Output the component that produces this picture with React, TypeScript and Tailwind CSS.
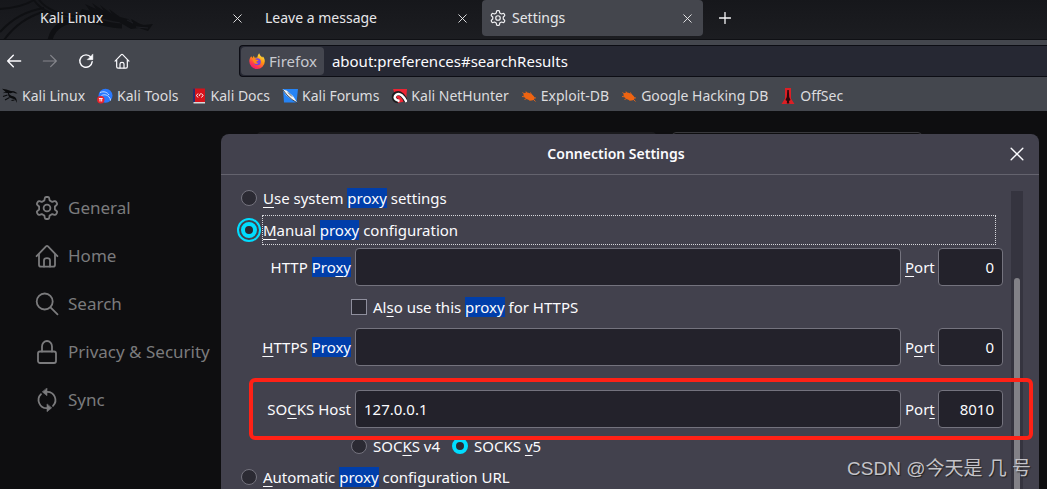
import React from 'react';

// One tooth of the settings gear, repeated every 60 degrees around the centre.
const TOOTH: [string, number[]][] = [
  ['L', [-2.6, -7.6]],
  ['L', [-2.2, -9.8]],
  ['Q', [-2, -11, -0.9, -11]],
  ['L', [0.9, -11]],
  ['Q', [2, -11, 2.2, -9.8]],
  ['L', [2.6, -7.6]],
];

const gearPath = () => {
  let d = '';
  for (let i = 0; i < 6; i++) {
    const a = (i * Math.PI) / 3;
    TOOTH.forEach(([cmd, pts], j) => {
      const out: string[] = [];
      for (let k = 0; k < pts.length; k += 2) {
        const x = pts[k] * Math.cos(a) - pts[k + 1] * Math.sin(a);
        const y = pts[k] * Math.sin(a) + pts[k + 1] * Math.cos(a);
        out.push(`${(x + 12).toFixed(2)} ${(y + 12).toFixed(2)}`);
      }
      d += (i === 0 && j === 0 ? 'M' : cmd) + out.join(' ');
    });
  }
  return d + 'Z';
};

const GEAR = gearPath();

type IconProps = { className?: string };

const Stroke = ({ className, width = 2, children }: { className?: string; width?: number; children: React.ReactNode }) => (
  <svg
    viewBox="0 0 24 24"
    className={className}
    fill="none"
    stroke="currentColor"
    strokeWidth={width}
    strokeLinecap="round"
    strokeLinejoin="round"
    aria-hidden="true"
  >
    {children}
  </svg>
);

const GearIcon = ({ className }: IconProps) => (
  <Stroke className={className} width={1.8}>
    <path d={GEAR} />
    <circle cx="12" cy="12" r="3.4" />
  </Stroke>
);

const HomeIcon = ({ className }: IconProps) => (
  <Stroke className={className} width={1.8}>
    <path d="M1.6 12.2 11 2.4q1-1 2 0l9.4 9.8" />
    <path d="M4 10.5v10.2q0 2 2 2h12q2 0 2-2V10.5" />
    <path d="M9 22.5V16.5q0-2.3 3-2.3t3 2.3v6" />
  </Stroke>
);

const SearchIcon = ({ className }: IconProps) => (
  <Stroke className={className} width={1.8}>
    <circle cx="9.7" cy="9.5" r="8" />
    <path d="m15.5 15.3 7 7" />
  </Stroke>
);

const LockIcon = ({ className }: IconProps) => (
  <Stroke className={className} width={1.8}>
    <rect x="3" y="11.5" width="18" height="11.5" rx="2" />
    <path d="M7 11.5V6.5a5 5.5 0 0 1 10 0v5" />
  </Stroke>
);

const SyncIcon = ({ className }: IconProps) => (
  <Stroke className={className} width={1.8}>
    <path d="M6 6.2A8.2 8.2 0 0 0 12 20.2M12 3.8A8.2 8.2 0 0 1 18 17.8" />
    <path d="M12 .3v7.4L7.5 4zM12 16.3v7.4l4.5-3.7z" fill="currentColor" strokeWidth={0.6} />
  </Stroke>
);

const BackIcon = ({ className }: IconProps) => (
  <Stroke className={className} width={2.1}>
    <path d="M22 12H2.5M11 3.5 2.5 12l8.5 8.5" />
  </Stroke>
);

const ForwardIcon = ({ className }: IconProps) => (
  <Stroke className={className} width={1.8}>
    <path d="M2 12h19.500M13 3.500l8.500 8.500-8.500 8.500" />
  </Stroke>
);

const ReloadIcon = ({ className }: IconProps) => (
  <Stroke className={className} width={2.1}>
    <path d="M19.500 6.500A9.300 9.300 0 1 0 21.300 13" />
    <path d="M22.300 2v8h-8z" fill="currentColor" strokeWidth={0.8} />
  </Stroke>
);

const CloseIcon = ({ className }: IconProps) => (
  <Stroke className={className} width={2.4}>
    <path d="m2 2 20 20M22 2 2 22" />
  </Stroke>
);

const PlusIcon = ({ className }: IconProps) => (
  <Stroke className={className} width={2.6}>
    <path d="M12 1v22M1 12h22" />
  </Stroke>
);

const FirefoxIcon = () => (
  <svg viewBox="0 0 16 16" className="size-4 shrink-0" aria-hidden="true">
    <defs>
      <linearGradient id="fx" x1="0.8" y1="0" x2="0.2" y2="1">
        <stop offset="0" stopColor="#fff14f" />
        <stop offset="0.4" stopColor="#ff980e" />
        <stop offset="0.75" stopColor="#ff3750" />
        <stop offset="1" stopColor="#e6157a" />
      </linearGradient>
    </defs>
    <path fill="url(#fx)" d="M2.300 3.300 3.500 5l1.300-2.200.8 2 2.800-.4c.2-1.500.6-3 1.800-4.200.4 2 2 3 3 4.300.5-.2.600-.9.500-1.200 1.300 1.400 2.100 3 2.100 5A7.700 7.700 0 0 1 8 16 7.700 7.700 0 0 1 .300 8.300C.3 6.500 1 4.500 2.300 3.300z" />
    <circle cx="8.300" cy="8.800" r="3.500" fill="#7543e3" />
    <path fill="#ff8a16" d="M3.300 6.400c1.700-.8 3-.4 4.200.4l2 .2c-.2 1.100-1.600 1-2 1.500-.2 1.200.7 1.500 2 1.200-1 1.500-3.300 1.600-4.400.2z" />
  </svg>
);

const icons = {
  kali: (
    <>
      <path
        d="M0 .8 4.500 1.500 9 3l3 .3 3.500 2-1.500.2-3-1-2.500.8-1.500-.2c0 2 1.800 2.500 4 3.200 2.500.9 4.200 2.200 3.800 6.700-.6-2.300-1.600-3.800-3.800-4.300C7.500 10 5.800 8.500 6 5.300L3.500 4.800.5 5.300 3.500 3.700z"
        fill="#0b0c0e"
      />
      <path d="M1 8.500 5.500 7M3 12l4.500-2.500M9.500 12.500l3-.5" stroke="#0b0c0e" strokeWidth="1.100" />
    </>
  ),
  tools: (
    <>
      <circle cx="8.500" cy="7.800" r="7" fill="#2979ff" />
      <path d="M3 4.500c4-1.500 7-.5 9 2.500M4.500 7.500c3-1.500 6-.5 7.500 1.500 1 1 1.500 2 1.500 3.500" fill="none" stroke="#c7dcff" strokeWidth="1" />
      <circle cx="3.800" cy="11.700" r="3.700" fill="#e8232b" />
      <path d="M1.900 10.500h3.800M3 10.500v3M4.700 10.500v3" stroke="#fff" strokeWidth=".9" />
    </>
  ),
  docs: (
    <>
      <path d="M2 .5h12v13.500H2z" fill="#d5131b" />
      <path d="M2 .5h2v13.500H2z" fill="#27306d" />
      <path d="M2.500 14H14v1.500H2.500z" fill="#d9d9d9" />
      <path d="m7 5.500-1.500 2L7 9.500M10.500 5.500l1.500 2-1.500 2M8 8l1.500-2.500" fill="none" stroke="#fff" strokeWidth="1" />
    </>
  ),
  forums: (
    <>
      <path d="M1 1h15l-1.500 13.500H2z" fill="#2684f5" />
      <path d="m.5 1.500 4 1 6.500 5.500 4.500 7-6-3.500L4 7z" fill="#f4f6f8" />
      <path d="m1 2 4 5 5 4.500 5.500 3.500M6 4.500l4 4" fill="none" stroke="#20242c" strokeWidth=".8" />
    </>
  ),
  nethunter: (
    <>
      <path d="M2 1h14l-1 12-8 2z" fill="#ed2433" />
      <path d="M15 13.500C13 8 9 4 5.500 5.500 1.500 7.500 2.500 12.500 7 13" fill="none" stroke="#1c1c1e" strokeWidth="4.500" />
      <path d="M15.500 14C12.500 8 9 4.500 5.500 6.500 2.500 8.500 3 12 8.500 13" fill="none" stroke="#fff" strokeWidth="2.400" />
    </>
  ),
  exploit: (
    <>
      <ellipse cx="8" cy="8.500" rx="6" ry="3.300" transform="rotate(25 8 8.500)" fill="#ef6412" />
      <path d="m1.500 4.500 4 3M5 3.500l2 3.500M9.500 4.500l1 2.500M1 8.500l4 .5M3.500 11.500 7 10M9 13v-3M14.500 13.500 11 10M15 10l-4-.500" stroke="#ef6412" strokeWidth=".9" />
    </>
  ),
  offsec: (
    <>
      <path d="M5 0h6v10.500L14.500 16h-13L5 10.500z" fill="#dc1f25" />
      <path d="M7.300 2h1.500l.4 7 1.300 3-1.500 1 .3 2.500H6.800L7 13l-1.500-1 1.300-3z" fill="#2c080b" />
    </>
  ),
};

const bookmarks: { name: string; icon: keyof typeof icons }[] = [
  { name: 'Kali Linux', icon: 'kali' },
  { name: 'Kali Tools', icon: 'tools' },
  { name: 'Kali Docs', icon: 'docs' },
  { name: 'Kali Forums', icon: 'forums' },
  { name: 'Kali NetHunter', icon: 'nethunter' },
  { name: 'Exploit-DB', icon: 'exploit' },
  { name: 'Google Hacking DB', icon: 'exploit' },
  { name: 'OffSec', icon: 'offsec' },
];

const tabs = [
  { name: 'Kali Linux', active: false },
  { name: 'Leave a message', active: false },
  { name: 'Settings', active: true },
];

const categories = [
  { name: 'General', Icon: GearIcon },
  { name: 'Home', Icon: HomeIcon },
  { name: 'Search', Icon: SearchIcon },
  { name: 'Privacy & Security', Icon: LockIcon },
  { name: 'Sync', Icon: SyncIcon },
];

const Hit = ({ children }: { children: React.ReactNode }) => (
  <mark className="bg-[#003eaa] text-inherit">{children}</mark>
);

// Access key letter
const Key = ({ children }: { children: React.ReactNode }) => (
  <span className="underline decoration-1 underline-offset-3">{children}</span>
);

const radioClass =
  'size-4 shrink-0 appearance-none rounded-full border border-[#74737e] bg-[#2b2a33] checked:border-4 checked:border-[#00ddff]';
const fieldClass = 'h-[38px] rounded border border-[#74737e] bg-[#23222b] px-2 text-[#fbfbfe] outline-none';

type ProxyRowProps = {
  id: string;
  label: React.ReactNode;
  portLabel: React.ReactNode;
  host: string;
  port: string;
};

function ProxyRow({ id, label, portLabel, host, port }: ProxyRowProps) {
  return (
    <div className="flex items-center gap-1">
      <label htmlFor={id} className="w-[110px] shrink-0 text-right whitespace-nowrap">{label}</label>
      <input id={id} type="text" defaultValue={host} className={`${fieldClass} min-w-0 flex-1`} />
      <label htmlFor={`${id}-port`} className="w-[29px] shrink-0">{portLabel}</label>
      <input id={`${id}-port`} type="text" inputMode="numeric" defaultValue={port} className={`${fieldClass} w-[65px] text-right`} />
    </div>
  );
}

function TabStrip() {
  return (
    <div className="relative h-10 shrink-0 border-b border-[#0f1014] bg-linear-to-b from-[#16171b] to-[#1c1d21] pl-8 text-sm text-[#e6e6e9]">
      <svg viewBox="0 0 160 40" className="absolute top-0 left-0 h-10 w-40" fill="none" stroke="#0f1013" aria-hidden="true">
        <path d="M0 9c14-1 26-4 34-9M0 32C10 21 24 11 44 8M4 40C14 26 28 16 46 11" strokeWidth="2" />
        <path d="M34 0c6 10 20 16 40 20M39 0c8 10 20 14 40 17" strokeWidth="2" />
        <path d="M50 40c3-13 14-20 32-20 14 0 26 6 40 6" strokeWidth="5" />
        <path
          d="M82 9 90 11 85 4l11 5-4-6 12 8-4-6 12 9-3-5 11 8 8 2 5 5-2-5c6 3 8 5 13 6l9-1-5 7-9-3-8 1-12-7c-10-1-18-5-28-5-6 0-10-2-11-4z"
          fill="#0f1013"
          stroke="none"
        />
        <path d="m127 20 6 3M136 27l12 1" stroke="#1d1e23" strokeWidth="1" />
      </svg>
      <div className="relative flex items-start gap-1">
        {tabs.map(tab => (
          <div
            key={tab.name}
            className={`flex h-9 w-[221px] items-center gap-1.5 rounded pr-2.5 pl-2 ${tab.active ? 'bg-[#44464d]' : ''}`}
          >
            {tab.active && <GearIcon className="size-4 shrink-0 text-[#f0f0f2]" />}
            <span className="flex-1 truncate">{tab.name}</span>
            <button type="button" aria-label={`Close ${tab.name}`} className="flex size-3 items-center justify-center">
              <CloseIcon className="size-[9px] text-[#f0f0f2]" />
            </button>
          </div>
        ))}
        <button type="button" aria-label="New tab" className="flex size-9 items-center justify-center">
          <PlusIcon className="size-3 text-[#f5f5f7]" />
        </button>
      </div>
    </div>
  );
}

function NavBar() {
  return (
    <div className="flex h-10 shrink-0 items-center bg-[#44474e] pt-0.5">
      <div className="flex w-[239px] shrink-0 items-center gap-5 pl-1.5 text-[#fbfbfe]">
        <button type="button" aria-label="Back"><BackIcon className="size-4" /></button>
        <button type="button" aria-label="Forward" className="text-[#85868c]"><ForwardIcon className="size-4" /></button>
        <button type="button" aria-label="Reload"><ReloadIcon className="size-4" /></button>
        <button type="button" aria-label="Home"><HomeIcon className="size-4" /></button>
      </div>
      <div className="flex h-8 flex-1 items-center gap-2 rounded-l border border-r-0 border-[#0c0d14] bg-[#262833] pl-px">
        <span className="flex h-7 items-center gap-1 rounded bg-[#44464f] pr-[7px] pl-2 text-[#c9cad0]">
          <FirefoxIcon />
          Firefox
        </span>
        <input
          type="text"
          aria-label="Address"
          defaultValue="about:preferences#searchResults"
          className="min-w-0 flex-1 bg-transparent text-[#fbfbfe] outline-none"
        />
      </div>
    </div>
  );
}

function BookmarksBar() {
  return (
    <nav className="flex h-[31px] shrink-0 items-center gap-3 overflow-hidden bg-[#44474e] pl-0.5 text-sm text-[#dcdcdf]">
      {bookmarks.map(({ name, icon }) => (
        <a key={name} href="#" className="flex shrink-0 items-center gap-1">
          <svg viewBox="0 0 16 16" className="size-4" aria-hidden="true">{icons[icon]}</svg>
          {name}
        </a>
      ))}
    </nav>
  );
}

function Sidebar() {
  return (
    <nav className="w-[221px] shrink-0 pt-[73px] pl-[35px]">
      {categories.map(({ name, Icon }) => (
        <a key={name} href="#" className="flex h-12 items-center gap-[9px] text-[17px] whitespace-nowrap text-[#7b7b7d]">
          <Icon className="size-6 shrink-0" />
          {name}
        </a>
      ))}
    </nav>
  );
}

function ConnectionDialog() {
  return (
    <div
      role="dialog"
      aria-labelledby="dialog-title"
      className="col-start-1 row-start-1 mt-[23px] flex min-h-0 flex-col overflow-hidden rounded-t-lg bg-[#42414d]"
    >
      <div className="flex h-[41px] shrink-0 items-center border-b border-[#64636e] pl-4">
        <h2 id="dialog-title" className="flex-1 text-center text-sm font-semibold">Connection Settings</h2>
        <button type="button" aria-label="Close" className="flex w-11 justify-center">
          <CloseIcon className="size-3.5" />
        </button>
      </div>

      <div className="flex min-h-0 flex-1 gap-2 overflow-hidden pr-4 pl-5">
        <form className="min-w-0 flex-1 pt-[13px]">
          <div className="flex h-5 items-center gap-1.5">
            <input id="system" type="radio" name="mode" className={radioClass} />
            <label htmlFor="system"><Key>U</Key>se system <Hit>proxy</Hit> settings</label>
          </div>
          <div className="mt-[7px] mb-[3px] flex h-[30px] items-center gap-[5px]">
            <input
              id="manual"
              type="radio"
              name="mode"
              defaultChecked
              className={`${radioClass} outline-2 outline-offset-2 outline-[#00ddff]`}
            />
            <label htmlFor="manual" className="mr-[7px] flex h-full flex-1 items-center border border-dotted border-[#d8d8dc]">
              <span><Key>M</Key>anual <Hit>proxy</Hit> configuration</span>
            </label>
          </div>

          <ProxyRow id="http" label={<>HTTP <Hit>Pro<Key>x</Key>y</Hit></>} portLabel={<><Key>P</Key>ort</>} host="" port="0" />
          <div className="flex h-[42px] items-center gap-1.5 pl-[110px]">
            <input id="share" type="checkbox" className="size-4 appearance-none border border-[#8f8f9d] bg-[#2b2a33]" />
            <label htmlFor="share">Al<Key>s</Key>o use this <Hit>proxy</Hit> for HTTPS</label>
          </div>
          <ProxyRow id="https" label={<><Key>H</Key>TTPS <Hit>Proxy</Hit></>} portLabel={<>P<Key>o</Key>rt</>} host="" port="0" />

          <div className="relative mt-6">
            <ProxyRow id="socks" label={<>SO<Key>C</Key>KS Host</>} portLabel={<>Por<Key>t</Key></>} host="127.0.0.1" port="8010" />
            <div className="pointer-events-none absolute -top-3 -right-[30px] -bottom-3 left-2 z-10 rounded-md border-4 border-[#ff2116]" />
          </div>

          <div className="flex h-9 items-center gap-3 pl-[110px]">
            <div className="flex items-center gap-1.5">
              <input id="v4" type="radio" name="socks-version" className={radioClass} />
              <label htmlFor="v4">SOC<Key>K</Key>S v4</label>
            </div>
            <div className="flex items-center gap-1.5">
              <input id="v5" type="radio" name="socks-version" defaultChecked className={radioClass} />
              <label htmlFor="v5">SOCKS <Key>v</Key>5</label>
            </div>
          </div>
          <div className="flex h-[26px] items-center gap-1.5">
            <input id="auto" type="radio" name="mode" className={radioClass} />
            <label htmlFor="auto"><Key>A</Key>utomatic <Hit>proxy</Hit> configuration URL</label>
          </div>
        </form>

        <div className="mt-4 flex w-3 shrink-0 justify-center bg-[#35343f] pt-[87px]">
          <div className="w-1.5 rounded-t-full bg-[#828187]" />
        </div>
      </div>
    </div>
  );
}

export default function App() {
  return (
    <div className="relative flex h-screen flex-col overflow-hidden bg-[#0e0e10] font-['Noto_Sans',sans-serif] text-[15px] leading-5 text-[#fbfbfe]">
      <TabStrip />
      <NavBar />
      <BookmarksBar />

      <div className="flex min-h-0 flex-1">
        <Sidebar />
        <main className="mr-2 grid min-h-0 min-w-0 flex-1 grid-cols-1 grid-rows-1">
          {/* Search row of the page, mostly hidden under the dialog */}
          <div className="col-start-1 row-start-1 mt-[21px] mr-[117px] ml-9 flex h-9 gap-4">
            <div className="flex-1 rounded bg-[#1a1a1d]" />
            <div className="w-[250px] rounded border border-[#38383c]" />
          </div>
          <ConnectionDialog />
        </main>
      </div>

      <div className="pointer-events-none absolute right-4 bottom-1.5 z-20 font-['Liberation_Sans','Noto_Sans_CJK_SC',sans-serif] text-[19px] leading-7 text-[#c4c3c8] [text-shadow:1px_1px_1px_#222]">
        CSDN @今天是 几 号
      </div>
    </div>
  );
}
